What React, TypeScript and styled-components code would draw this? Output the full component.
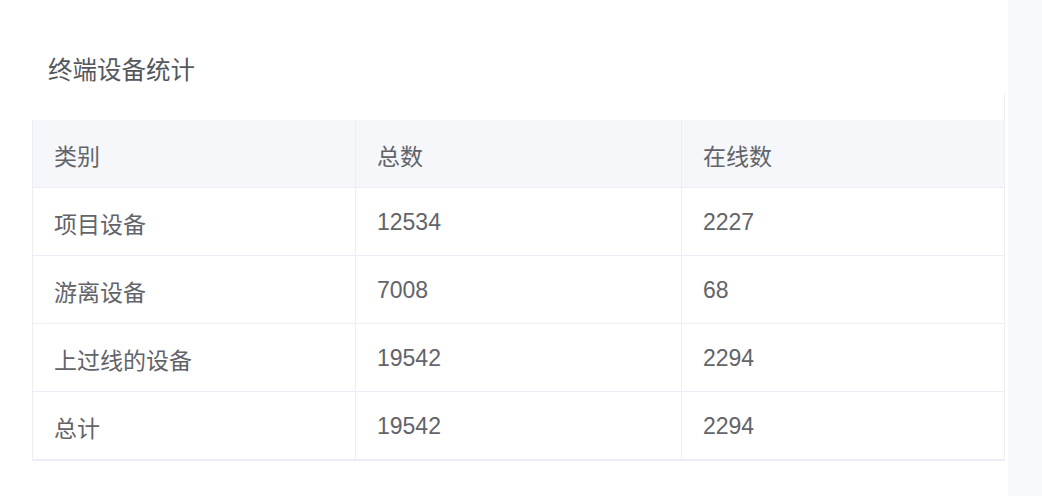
import styled, { createGlobalStyle } from 'styled-components';

const GlobalStyle = createGlobalStyle`
  html, body {
    margin: 0;
    padding: 0;
    background: #ffffff;
  }
  body {
    font-family: 'Liberation Sans', 'Noto Sans CJK SC', sans-serif;
  }
`;

const Page = styled.div`
  display: flex;
  width: 1042px;
  height: 496px;
  overflow: hidden;
`;

const Panel = styled.div`
  width: 1008px;
  padding: 0 0 0 32px;
  box-sizing: border-box;
  background: #ffffff;
`;

const SideStrip = styled.div`
  flex: 1;
  background: #f8f9fc;
`;

const Title = styled.h3`
  margin: 0;
  padding: 55px 0 0 16px;
  height: 93px;
  box-sizing: border-box;
  font-size: 24.5px;
  line-height: 28px;
  font-weight: 400;
  color: #54585e;
  font-family: 'Noto Sans CJK SC', sans-serif;
`;

const TableWrap = styled.div`
  padding-top: 27px;
  border-right: 1px solid #eceef2;
  width: 973px;
  box-sizing: border-box;
`;

const Table = styled.div`
  display: grid;
  grid-template-columns: 323px 326px 1fr;
  border-left: 1px solid #ebeef5;
  border-bottom: 1px solid #ebeef5;
`;

const Cell = styled.div<{ $head?: boolean; $last?: boolean }>`
  height: 68px;
  box-sizing: border-box;
  display: flex;
  align-items: center;
  padding: 2px 20px 0 21px;
  background: ${({ $head }) => ($head ? '#f5f7fa' : '#ffffff')};
  border-right: ${({ $last }) => ($last ? 'none' : '1px solid #ebeef5')};
  border-bottom: 1px solid #ebeef5;
  font-size: 23px;
  color: #626469;
  font-family: 'Liberation Sans', 'Noto Sans CJK SC', sans-serif;
`;

const head = ['类别', '总数', '在线数'];

const rows = [
  ['项目设备', '12534', '2227'],
  ['游离设备', '7008', '68'],
  ['上过线的设备', '19542', '2294'],
  ['总计', '19542', '2294'],
];

const App = () => (
  <Page>
    <GlobalStyle />
    <Panel>
      <Title>终端设备统计</Title>
      <TableWrap>
        <Table>
          {head.map((h, i) => (
            <Cell key={h} $head $last={i === 2}>
              {h}
            </Cell>
          ))}
          {rows.map((r) =>
            r.map((v, i) => (
              <Cell key={r[0] + i} $last={i === 2}>
                {v}
              </Cell>
            ))
          )}
        </Table>
      </TableWrap>
    </Panel>
    <SideStrip />
  </Page>
);

export default App;
